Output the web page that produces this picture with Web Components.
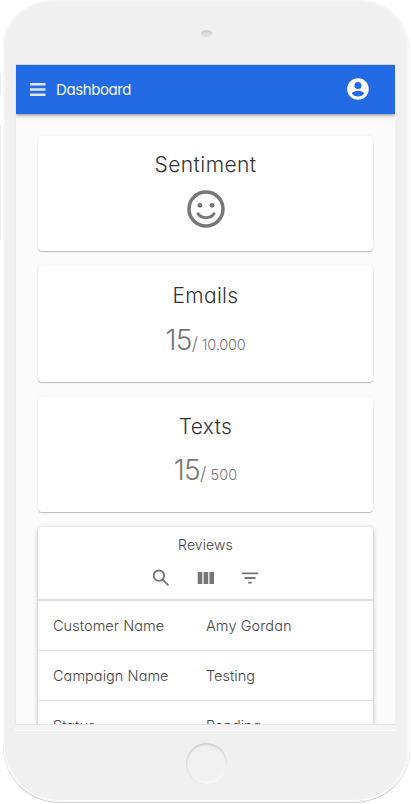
<!DOCTYPE html>
<html lang="en">
<head>
<meta charset="utf-8">
<title>Dashboard</title>
<style>
html,body{margin:0;height:100%;overflow:hidden;background:#fff}
body{font-family:Inter,"Open Sans",sans-serif;font-weight:300;font-feature-settings:"cv11" 1,"ss03" 1;color:#333}
</style>
</head>
<body>
<phone-frame>
  <app-bar>Dashboard</app-bar>
  <app-content>
    <stat-card style="--ls:.45px"><span slot="title">Sentiment</span><smile-icon></smile-icon></stat-card>
    <stat-card style="--ls:.3px;--top:15px"><span slot="title">Emails</span><usage-count used="15" total="10,000" style="--tls:-.2px"></usage-count></stat-card>
    <stat-card style="--ls:.35px;--top:15px"><span slot="title">Texts</span><usage-count used="15" total="500" style="--tls:.1px"></usage-count></stat-card>
    <reviews-card>
      <review-row style="--l:.05px;--v:.1px"><span slot="label">Customer Name</span>Amy Gordan</review-row>
      <review-row style="--l:.05px"><span slot="label">Campaign Name</span>Testing</review-row>
      <review-row><span slot="label">Status</span>Pending</review-row>
    </reviews-card>
  </app-content>
</phone-frame>
<script>
function define(name, html, setup) {
  const template = document.createElement('template');
  template.innerHTML = html;
  customElements.define(name, class extends HTMLElement {
    constructor() {
      super();
      this.attachShadow({mode: 'open'}).append(template.content.cloneNode(true));
    }
    connectedCallback() { if (setup) setup(this, this.shadowRoot); }
  });
}
define('phone-frame', `<style>
:host{display:block;position:relative;width:411px;height:804px;overflow:hidden;background:#fff}
.body{box-sizing:border-box;margin-left:3px;width:407px;height:802px;padding:64px 14px 0 12px;border:1px solid #f6f6f6;border-radius:52px 50px 56px 56px/44px 50px 52px 56px;background:#f0f0f0;display:flex;flex-direction:column;align-items:stretch;box-shadow:inset 1px 0 #f8f8f8,inset -2px 0 2px #f8f8f8,inset 0 -1px #fff,0 1px 0 -.2px #c5c5c5}
.screen{box-sizing:border-box;height:660px;overflow:hidden;background:#fbfbfb;border-bottom:1px solid #e4e4e4;box-shadow:-1px 0 #e8e8e8,0 -1px #d4d6e4}
.lip{height:6px;margin:0 -1px;background:#f4f4f4;border-bottom:1px solid #fff;box-sizing:border-box}
.home{width:41px;height:41px;margin:12px auto 0;transform:translateX(1px);border-radius:50%;background:#f1f1f1;box-shadow:inset 0 2px 2px #cfcfcf,inset 1px 0 1px #dfdfdf,inset 0 -2px 2px #faf9f6;flex:none}
.camera{position:absolute;left:201px;top:30px;width:11px;height:8px;border-radius:50%;background:#dedede;box-shadow:inset 0 2px 1px #cecdcd,inset 0 -1px 1px #eee}
.side{position:absolute;left:0;width:1px;background:#ededed}
</style><div class="body"><div class="screen"><slot></slot></div><div class="lip"></div><div class="home"></div></div>
<i class="camera"></i><i class="side" style="top:73px;height:22px"></i><i class="side" style="top:125px;height:115px"></i>`);
define('app-bar', `<style>
:host{display:flex;position:relative;align-items:center;height:49px;box-sizing:border-box;padding:0 24px 1px 14px;background:#236be5;color:#f4f6ff;font-size:15px;font-weight:400;box-shadow:0 1px 3px rgba(0,0,0,.35),0 2px 6px rgba(0,0,0,.14)}
.menu{width:15.5px;height:13px;margin-right:10.500px}
.text{flex:1;letter-spacing:-.4px}
.user{width:26px;height:26px;fill:#fff}
</style><svg class="menu" viewBox="0 0 15.5 13"><path d="M0 0h15.5v2.400H0zM0 5.300h15.5v2.400H0zM0 10.600h15.500v2.400H0z" fill="#dfe8fe"/></svg>
<span class="text"><slot></slot></span>
<svg class="user" viewBox="0 0 24 24"><path fill-rule="evenodd" d="M12 2C6.480 2 2 6.480 2 12s4.480 10 10 10 10-4.480 10-10S17.520 2 12 2zm0 3.500a3.300 3.300 0 1 1 0 6.600 3.300 3.300 0 0 1 0-6.600zm0 13.400c-2.500 0-4.600-1.100-5.700-2.800.8-1.500 3.200-2.400 5.700-2.400s4.900.9 5.700 2.400c-1.100 1.700-3.200 2.800-5.700 2.800z"/></svg>`);
define('app-content', `<style>:host{display:flex;flex-direction:column;gap:15px;padding:22px 22px 0}</style><slot></slot>`);
define('stat-card', `<style>
:host{display:flex;flex-direction:column;align-items:center;height:115.300px;box-sizing:border-box;padding-top:var(--top,14px);border-radius:4px;background:#fff;box-shadow:0 1px 1px rgba(0,0,0,.24),0 0 3px rgba(0,0,0,.07)}
.title{font-size:21px;line-height:30px;letter-spacing:var(--ls);color:#333}
</style><div class="title"><slot name="title"></slot></div><slot></slot>`);
define('smile-icon', `<style>:host{display:block;width:38px;height:38px;margin-top:10px}svg{display:block}</style>
<svg width="38" height="38" viewBox="0 0 38 38" fill="none" stroke="#767676"><circle cx="19" cy="19" r="17" stroke-width="3.500"/><path d="M11 23.800c3.200 5.100 12.800 5.100 16 0" stroke-width="3" stroke-linecap="round"/><g fill="#767676" stroke="none"><circle cx="12.900" cy="15.300" r="2.400"/><circle cx="25.200" cy="15.300" r="2.400"/></g></svg>`);
define('usage-count', `<style>
:host{display:flex;align-items:baseline;color:#767676;line-height:40px;margin-top:8.500px}
.used{font-size:28px;letter-spacing:-.7px}.total{font-size:14.500px;letter-spacing:var(--tls,0);white-space:pre}
.slash{font-size:18px;white-space:pre}
</style><span class="used"></span><span class="slash">/</span><span class="total"></span>`, (host, root) => {
  root.querySelector('.used').textContent = host.getAttribute('used');
  root.querySelector('.total').textContent = ' ' + host.getAttribute('total');
});
define('reviews-card', `<style>
:host{display:block;flex:none;border-radius:4px;background:#fff;box-shadow:0 1px 5px rgba(0,0,0,.24),0 2px 3px rgba(0,0,0,.08)}
header{height:74px;box-sizing:border-box;padding-top:8px;border-bottom:2px solid #dedede;display:flex;flex-direction:column;align-items:center}
.title{font-size:14px;line-height:20px;letter-spacing:.1px;color:#444}
.tools{display:grid;grid-template-columns:repeat(3,44.500px);justify-items:center;align-items:center;height:20px;margin-top:12px}
svg{fill:#767676;width:22px;height:22px}
</style><header><div class="title">Reviews</div><div class="tools">
<svg viewBox="0 0 24 24"><g fill="none" stroke="#767676" stroke-width="2"><circle cx="9.700" cy="9.500" r="5.700"/><path d="M13.800 13.800l6.300 6.200"/></g></svg>
<svg viewBox="0 0 24 24"><path d="M3 5.500h5v13H3zM9.400 5.500h5v13h-5zM15.800 5.500h5v13h-5z"/></svg>
<svg viewBox="0 0 24 24"><path d="M10 18h4v-2h-4v2zM3 6v2h18V6H3zm3 7h12v-2H6v2z"/></svg>
</div></header><slot></slot>`);
define('review-row', `<style>
:host{display:grid;grid-template-columns:153px 1fr;align-items:center;height:50px;box-sizing:border-box;padding:0 15px;border-bottom:1px solid #e3e3e3;font-size:14.500px;color:#444}
.label{letter-spacing:var(--l,0)}.value{letter-spacing:var(--v,0)}
</style><div class="label"><slot name="label"></slot></div><div class="value"><slot></slot></div>`);
</script>
</body>
</html>
